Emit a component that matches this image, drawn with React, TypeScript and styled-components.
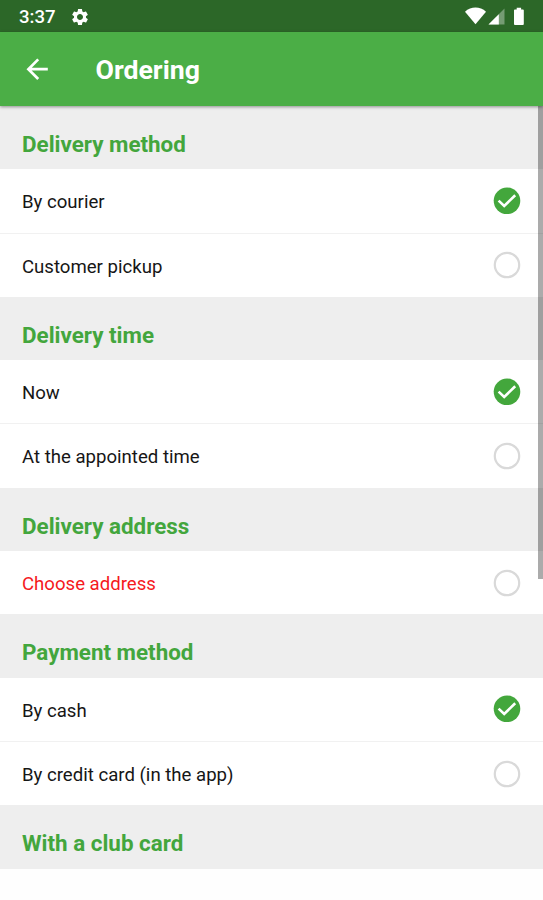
import React from 'react';
import styled, { createGlobalStyle } from 'styled-components';

const GlobalStyle = createGlobalStyle`
  * { box-sizing: border-box; }
  body { margin: 0; background: #fff; font-family: Roboto, "Liberation Sans", sans-serif; }
`;

const Screen = styled.div`
  position: relative;
  display: flex;
  flex-direction: column;
  width: 543px;
  height: 900px;
  overflow: hidden;
  background: #fefefe;
`;

const StatusBar = styled.div`
  display: flex;
  align-items: center;
  height: 32px;
  flex: none;
  padding: 1px 17px 0 19px;
  background: #2c6728;
  color: #fff;
`;

const Clock = styled.span`
  font-size: 18.6px;
  font-weight: 500;
  line-height: 24px;
  width: 51px;
`;

const StatusIcons = styled.div`
  display: flex;
  align-items: center;
  margin-left: auto;
`;

const AppBar = styled.header`
  position: relative;
  z-index: 1;
  display: flex;
  align-items: center;
  height: 74px;
  flex: none;
  padding-left: 26px;
  background: #4bae46;
  color: #fff;
  box-shadow: 0 1px 3px rgba(0, 0, 0, 0.4);
`;

const Title = styled.h1`
  margin: 1px 0 0 47.5px;
  font-size: 26.7px;
  line-height: 32px;
  font-weight: 700;
`;

const List = styled.main`
  display: flex;
  flex-direction: column;
`;

const SectionTitle = styled.h2`
  height: 63.3px;
  margin: 0;
  padding: 23.8px 22px 0;
  background: #eee;
  color: #43a63d;
  font-size: 22.4px;
  line-height: 28px;
  font-weight: 700;
`;

const Options = styled.div`
  display: flex;
  flex-direction: column;
  gap: 1px;
  background: #f1f1f1;
`;

const Option = styled.div<{ $alert?: boolean }>`
  display: flex;
  align-items: center;
  justify-content: space-between;
  height: 63.3px;
  padding: 0 22.5px 0 22px;
  background: #fff;
  color: ${(p) => (p.$alert ? '#f5191d' : '#161616')};
  font-size: 18.6px;
  line-height: 24px;
`;

const OptionLabel = styled.span`
  padding-top: 2.6px;
`;

const ScrollThumb = styled.div`
  position: absolute;
  top: 106px;
  right: 0;
  width: 5px;
  height: 473px;
  background: rgba(0, 0, 0, 0.33);
`;

const RadioSvg = styled.svg`
  display: block;
  flex: none;
`;

function Radio({ checked }: { checked?: boolean }) {
  return (
    <RadioSvg width="28" height="28" viewBox="0 0 28 28" fill="none">
      {checked ? (
        <>
          <circle cx="14" cy="13.8" r="13.3" fill="#43a73c" />
          <path d="M5.6 13.6 11.2 19 22.2 8.2" stroke="#fff" strokeWidth="2.6" />
        </>
      ) : (
        <circle cx="14" cy="14" r="12.2" stroke="#d9d9d9" strokeWidth="2.2" />
      )}
    </RadioSvg>
  );
}

type Item = { label: string; checked?: boolean; alert?: boolean };

const sections: { title: string; items: Item[] }[] = [
  { title: 'Delivery method', items: [{ label: 'By courier', checked: true }, { label: 'Customer pickup' }] },
  { title: 'Delivery time', items: [{ label: 'Now', checked: true }, { label: 'At the appointed time' }] },
  { title: 'Delivery address', items: [{ label: 'Choose address', alert: true }] },
  { title: 'Payment method', items: [{ label: 'By cash', checked: true }, { label: 'By credit card (in the app)' }] },
  { title: 'With a club card', items: [] },
];

export default function App() {
  return (
    <>
      <GlobalStyle />
      <Screen>
        <StatusBar>
          <Clock>3:37</Clock>
          <svg width="20" height="20" viewBox="0 0 24 24" fill="#fff">
            <path d="M19.14 12.94c.04-.3.06-.61.06-.94 0-.32-.02-.64-.07-.94l2.03-1.58c.18-.14.23-.41.12-.61l-1.92-3.32c-.12-.22-.37-.29-.59-.22l-2.39.96c-.5-.38-1.03-.7-1.62-.94l-.36-2.54c-.04-.24-.24-.41-.48-.41h-3.84c-.24 0-.43.17-.47.41l-.36 2.54c-.59.24-1.13.57-1.62.94l-2.39-.96c-.22-.08-.47 0-.59.22L2.74 8.87c-.12.21-.08.47.12.61l2.03 1.58c-.05.3-.09.63-.09.94s.02.64.07.94l-2.03 1.58c-.18.14-.23.41-.12.61l1.92 3.32c.12.22.37.29.59.22l2.39-.96c.5.38 1.03.7 1.62.94l.36 2.54c.05.24.24.41.48.41h3.84c.24 0 .44-.17.47-.41l.36-2.54c.59-.24 1.13-.56 1.62-.94l2.39.96c.22.08.47 0 .59-.22l1.92-3.32c.12-.22.07-.47-.12-.61l-2.01-1.58zM12 15.6c-1.98 0-3.6-1.62-3.6-3.6s1.62-3.6 3.6-3.6 3.6 1.62 3.6 3.6-1.62 3.6-3.6 3.6z" />
          </svg>
          <StatusIcons>
            <svg width="62" height="20" viewBox="0 0 62 20" fill="#fff">
              <path d="M1 4.8C7-.8 16-.8 22 4.8L11.5 17.3Z" />
              <path d="M40.5 1.5v16H24.5Z" fillOpacity="0.35" />
              <path d="M34.8 7.2V17.5H24.5Z" />
              <path d="M50.9 2.4h1.8V.7h4.4v1.7h1.8q.9 0 .9.9V17q0 .9-.9.9h-8q-.9 0-.9-.9V3.3q0-.9.9-.9Z" />
            </svg>
          </StatusIcons>
        </StatusBar>
        <AppBar>
          <svg width="22" height="22" viewBox="0 0 22 22" fill="none" stroke="#fff" strokeWidth="2.7">
            <path d="M21.8 11.2H2.8M12.2 1.4 2.4 11.2 12.2 21" />
          </svg>
          <Title>Ordering</Title>
        </AppBar>
        <List>
          {sections.map((section) => (
            <React.Fragment key={section.title}>
              <SectionTitle>{section.title}</SectionTitle>
              <Options>
                {section.items.map((item) => (
                  <Option key={item.label} $alert={item.alert}>
                    <OptionLabel>{item.label}</OptionLabel>
                    <Radio checked={item.checked} />
                  </Option>
                ))}
              </Options>
            </React.Fragment>
          ))}
        </List>
        <ScrollThumb />
      </Screen>
    </>
  );
}
